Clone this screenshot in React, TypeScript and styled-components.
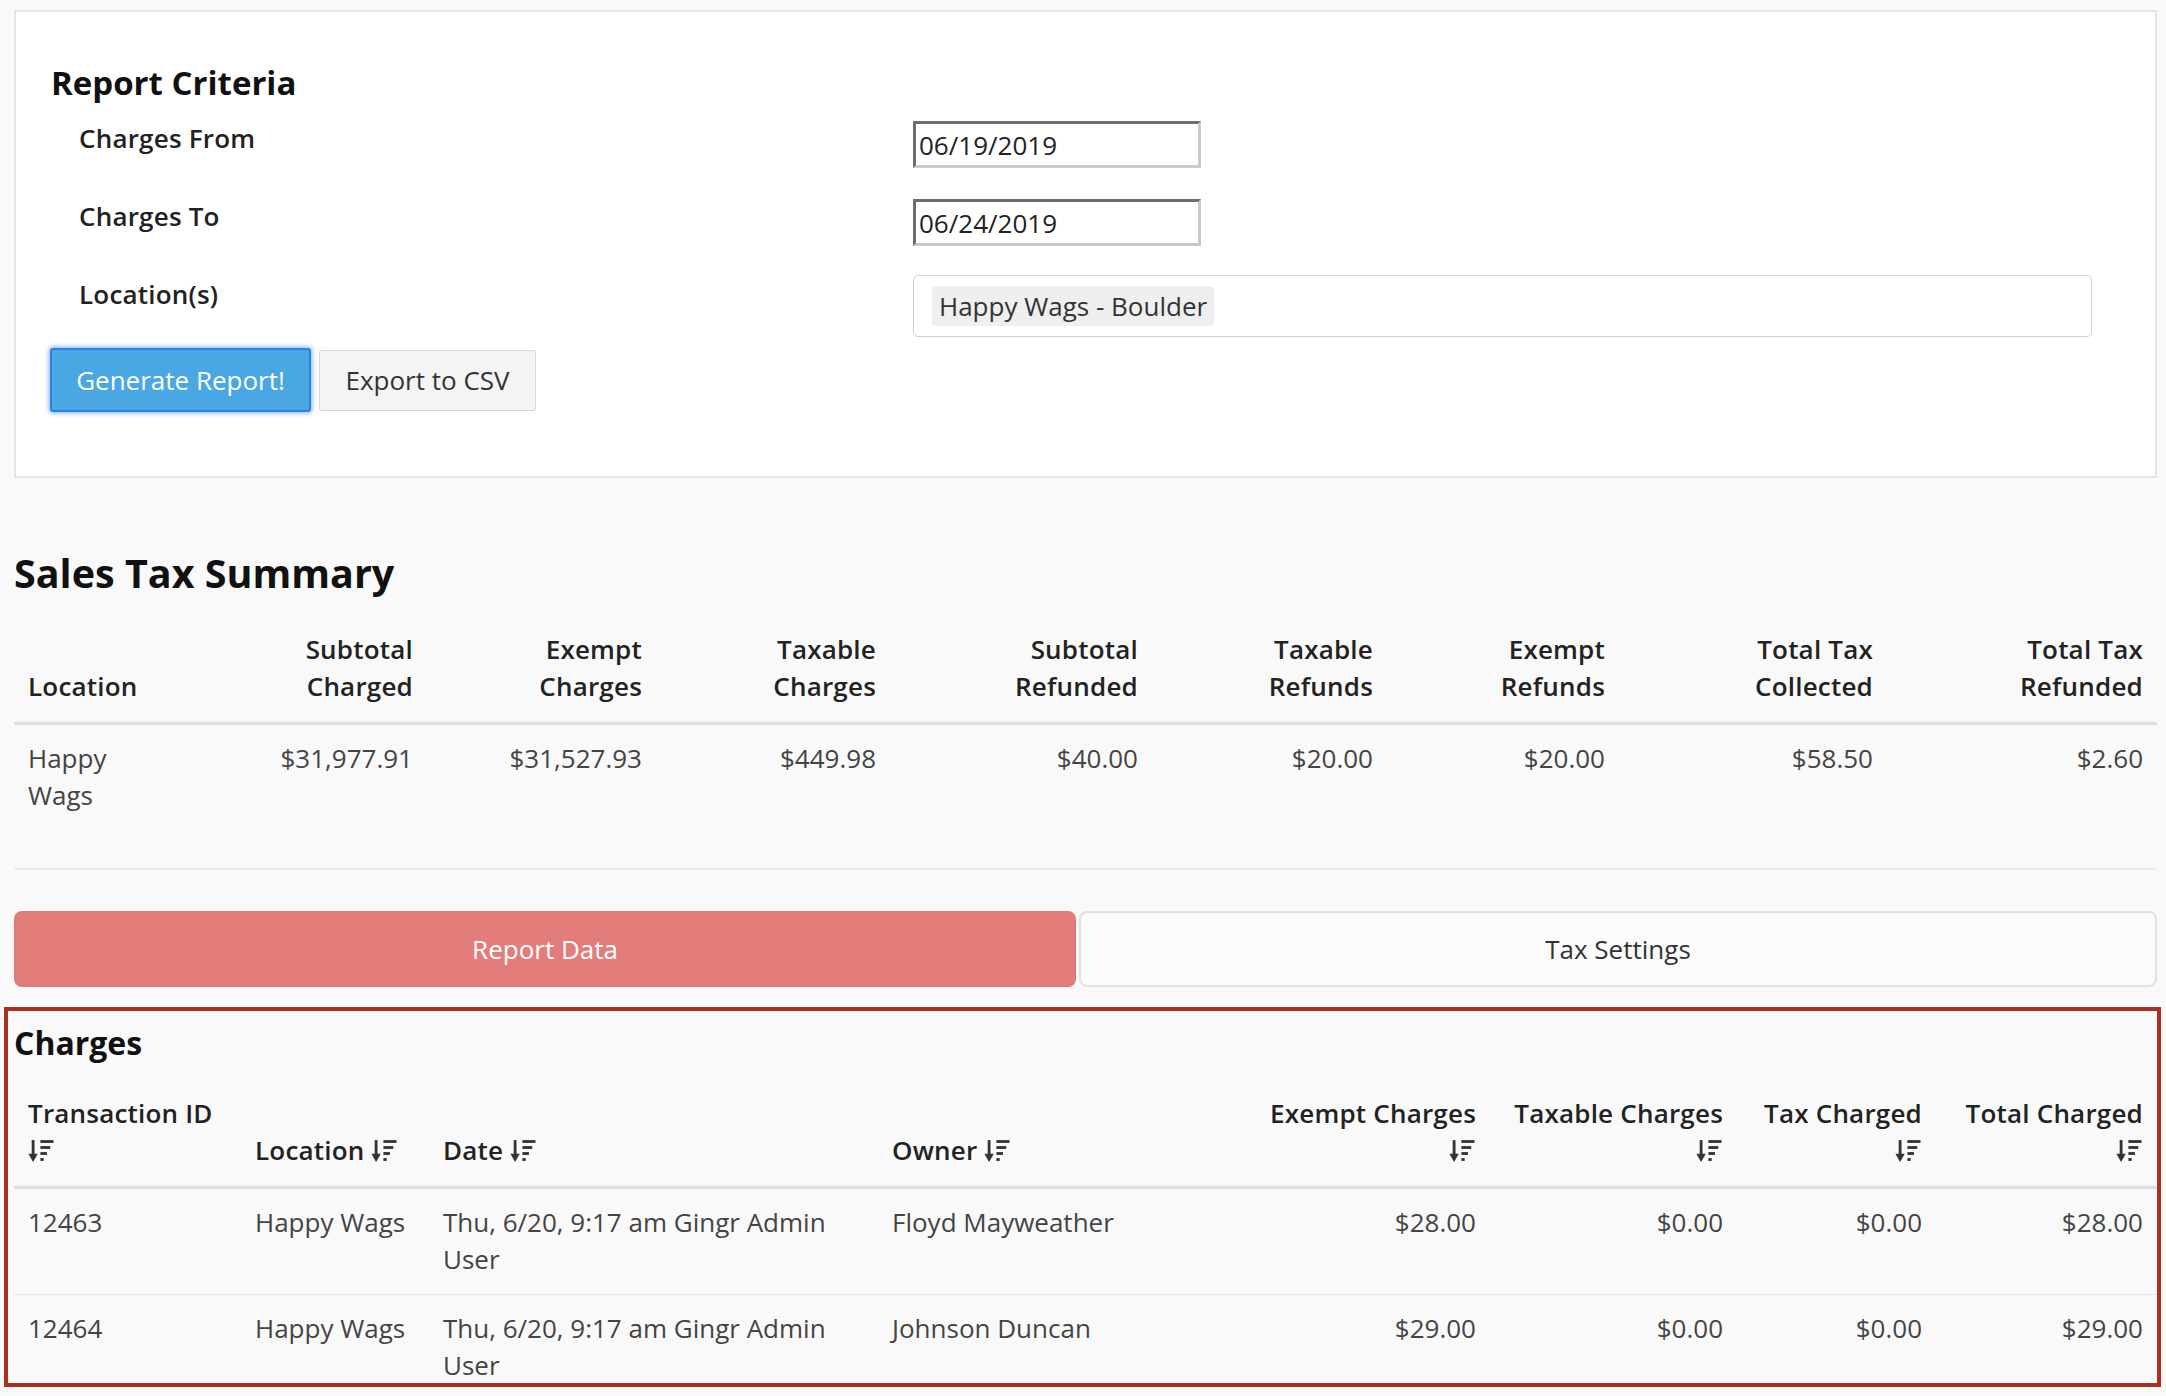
import styled, { createGlobalStyle } from 'styled-components'

const GlobalStyle = createGlobalStyle`
  html, body {
    margin: 0;
    padding: 0;
    background: #f9f9f9;
  }
  body {
    font-family: 'Open Sans', 'Liberation Sans', sans-serif;
    font-size: 26px;
    line-height: 37px;
    color: #444;
  }
  * {
    box-sizing: border-box;
  }
`

const SortIcon = () => (
  <Icon viewBox='0 0 24 22' width='27' height='24'>
    <rect x='3' y='1' width='2.6' height='14' />
    <polygon points='0,13.5 8.6,13.5 4.3,21' />
    <rect x='11' y='1' width='12' height='2.6' />
    <rect x='11' y='6.5' width='9' height='2.6' />
    <rect x='11' y='12' width='6' height='2.6' />
    <rect x='11' y='17.5' width='3' height='2.6' />
  </Icon>
)

const summaryCols = [
  { label: ['Location'], w: 160, left: true },
  { label: ['Subtotal', 'Charged'], w: 253 },
  { label: ['Exempt', 'Charges'], w: 229 },
  { label: ['Taxable', 'Charges'], w: 234 },
  { label: ['Subtotal', 'Refunded'], w: 262 },
  { label: ['Taxable', 'Refunds'], w: 235 },
  { label: ['Exempt', 'Refunds'], w: 232 },
  { label: ['Total Tax', 'Collected'], w: 268 },
  { label: ['Total Tax', 'Refunded'], w: 270 },
]

const summaryRow = ['Happy Wags', '$31,977.91', '$31,527.93', '$449.98', '$40.00', '$20.00', '$20.00', '$58.50', '$2.60']

const chargeCols = [
  { label: 'Transaction ID', w: 227, left: true, stack: true },
  { label: 'Location', w: 188, left: true },
  { label: 'Date', w: 449, left: true },
  { label: 'Owner', w: 372, left: true },
  { label: 'Exempt Charges', w: 240, stack: true },
  { label: 'Taxable Charges', w: 247, stack: true },
  { label: 'Tax Charged', w: 199, stack: true },
  { label: 'Total Charged', w: 221, stack: true },
]

const charges = [
  ['12463', 'Happy Wags', 'Thu, 6/20, 9:17 am Gingr Admin User', 'Floyd Mayweather', '$28.00', '$0.00', '$0.00', '$28.00'],
  ['12464', 'Happy Wags', 'Thu, 6/20, 9:17 am Gingr Admin User', 'Johnson Duncan', '$29.00', '$0.00', '$0.00', '$29.00'],
]

const App = () => {
  return (
    <>
      <GlobalStyle />
      <Page>
        <Card>
          <CardTitle>Report Criteria</CardTitle>
          <Form>
            <Label>Charges From</Label>
            <DateInput defaultValue='06/19/2019' />
            <Label>Charges To</Label>
            <DateInput defaultValue='06/24/2019' />
            <Label>Location(s)</Label>
            <MultiSelect>
              <Tag>Happy Wags - Boulder</Tag>
            </MultiSelect>
          </Form>
          <Buttons>
            <PrimaryButton>Generate Report!</PrimaryButton>
            <SecondaryButton>Export to CSV</SecondaryButton>
          </Buttons>
        </Card>

        <Summary>
          <SectionTitle>Sales Tax Summary</SectionTitle>
          <Table>
            <colgroup>
              {summaryCols.map((c, i) => (
                <col key={i} style={{ width: c.w }} />
              ))}
            </colgroup>
            <thead>
              <tr>
                {summaryCols.map((c, i) => (
                  <Th key={i} $left={c.left}>
                    {c.label.map((l, j) => (
                      <div key={j}>{l}</div>
                    ))}
                  </Th>
                ))}
              </tr>
            </thead>
            <tbody>
              <tr>
                {summaryRow.map((v, i) => (
                  <Td key={i} $left={i === 0} $last>
                    {v}
                  </Td>
                ))}
              </tr>
            </tbody>
          </Table>
        </Summary>

        <Tabs>
          <Tab $active $basis={1062}>Report Data</Tab>
          <Tab $basis={1078}>Tax Settings</Tab>
        </Tabs>

        <Highlight>
          <ChargesTitle>Charges</ChargesTitle>
          <Table>
            <colgroup>
              {chargeCols.map((c, i) => (
                <col key={i} style={{ width: c.w }} />
              ))}
            </colgroup>
            <thead>
              <tr>
                {chargeCols.map((c, i) => (
                  <Th key={i} $left={c.left}>
                    {c.label}
                    {c.stack ? <br /> : ' '}
                    <SortIcon />
                  </Th>
                ))}
              </tr>
            </thead>
            <tbody>
              {charges.map((row, r) => (
                <tr key={r}>
                  {row.map((v, i) => (
                    <Td key={i} $left={chargeCols[i].left}>
                      {v}
                    </Td>
                  ))}
                </tr>
              ))}
            </tbody>
          </Table>
        </Highlight>
      </Page>
    </>
  )
}

export default App

const Page = styled.div`
  padding: 10px 9px 0 14px;
  height: 1396px;
  overflow: hidden;
`

const Card = styled.div`
  background: #fff;
  border: 2px solid #e4e4e4;
  padding: 48px 63px 64px 35px;
`

const CardTitle = styled.h3`
  margin: 0 0 15px;
  font-size: 33px;
  line-height: 45px;
  font-weight: 700;
  color: #111;
`

const Form = styled.div`
  display: grid;
  grid-template-columns: 834px 1fr;
  row-gap: 30px;
  margin-left: 28px;
  align-items: start;
`

const Label = styled.div`
  font-weight: 600;
  color: #222;
  letter-spacing: 0.2px;
`

const DateInput = styled.input`
  width: 288px;
  height: 47px;
  margin-top: 1px;
  padding: 0 3px;
  font-family: inherit;
  font-size: 26px;
  color: #222;
  background: #fff;
  border-style: solid;
  border-width: 3px;
  border-color: #6e6e6e #c9c9c9 #c9c9c9 #6e6e6e;
  outline: none;
`

const MultiSelect = styled.div`
  height: 62px;
  margin-top: -1px;
  border: 1.5px solid #cfcfcf;
  border-radius: 5px;
  background: #fff;
  display: flex;
  align-items: center;
  padding: 0 18px;
`

const Tag = styled.span`
  display: inline-flex;
  align-items: center;
  height: 40px;
  padding: 0 7px;
  background: #efefef;
  border-radius: 4px;
  color: #333;
`

const Buttons = styled.div`
  display: flex;
  align-items: center;
  gap: 8px;
  margin: 11px 0 0 -1px;
`

const PrimaryButton = styled.button`
  width: 261px;
  height: 64px;
  font-family: inherit;
  font-size: 26px;
  color: #fff;
  background: #49a7e3;
  border: 2px solid #2f7fe6;
  border-radius: 3px;
  box-shadow: 0 0 5px 1px rgba(70, 140, 240, 0.7);
`

const SecondaryButton = styled.button`
  width: 217px;
  height: 61px;
  font-family: inherit;
  font-size: 26px;
  color: #333;
  background: #f4f4f4;
  border: 1.5px solid #d8d8d8;
  border-radius: 2px;
`

const Summary = styled.section`
  margin-top: 68px;
  padding-bottom: 38px;
  border-bottom: 2px solid #ececec;
`

const SectionTitle = styled.h2`
  margin: 0 0 14px;
  font-size: 39.5px;
  line-height: 55px;
  font-weight: 700;
  color: #111;
`

const Table = styled.table`
  width: 100%;
  table-layout: fixed;
  border-collapse: collapse;
`

const Th = styled.th<{ $left?: boolean }>`
  padding: 16px 14px 17px;
  vertical-align: bottom;
  text-align: ${(p) => (p.$left ? 'left' : 'right')};
  font-weight: 600;
  color: #222;
  letter-spacing: 0.2px;
  border-bottom: 3px solid #dedede;
`

const Td = styled.td<{ $left?: boolean; $last?: boolean }>`
  padding: 15px 14px 16px;
  vertical-align: top;
  text-align: ${(p) => (p.$left ? 'left' : 'right')};
  color: #444;
  border-bottom: ${(p) => (p.$last ? 'none' : '1.5px solid #e6e6e6')};
`

const Icon = styled.svg`
  fill: #333;
  vertical-align: -3px;
`

const Tabs = styled.div`
  display: flex;
  gap: 3px;
  margin-top: 41px;
`

const Tab = styled.div<{ $active?: boolean; $basis: number }>`
  flex: ${(p) => p.$basis} 1 0;
  height: 76px;
  display: flex;
  align-items: center;
  justify-content: center;
  border-radius: 8px;
  border: 2px solid ${(p) => (p.$active ? '#e07a78' : '#e2e2e2')};
  background: ${(p) => (p.$active ? '#e27d7b' : '#fbfbfb')};
  color: ${(p) => (p.$active ? '#fff' : '#333')};
`

const Highlight = styled.div`
  margin: 20px -4px 0 -10px;
  height: 380px;
  overflow: hidden;
  border: 4px solid #ad2f22;
  padding: 10px 0 0 6px;
`

const ChargesTitle = styled.h3`
  margin: 0 0 14px;
  font-size: 32px;
  line-height: 44px;
  font-weight: 700;
  color: #111;
`
